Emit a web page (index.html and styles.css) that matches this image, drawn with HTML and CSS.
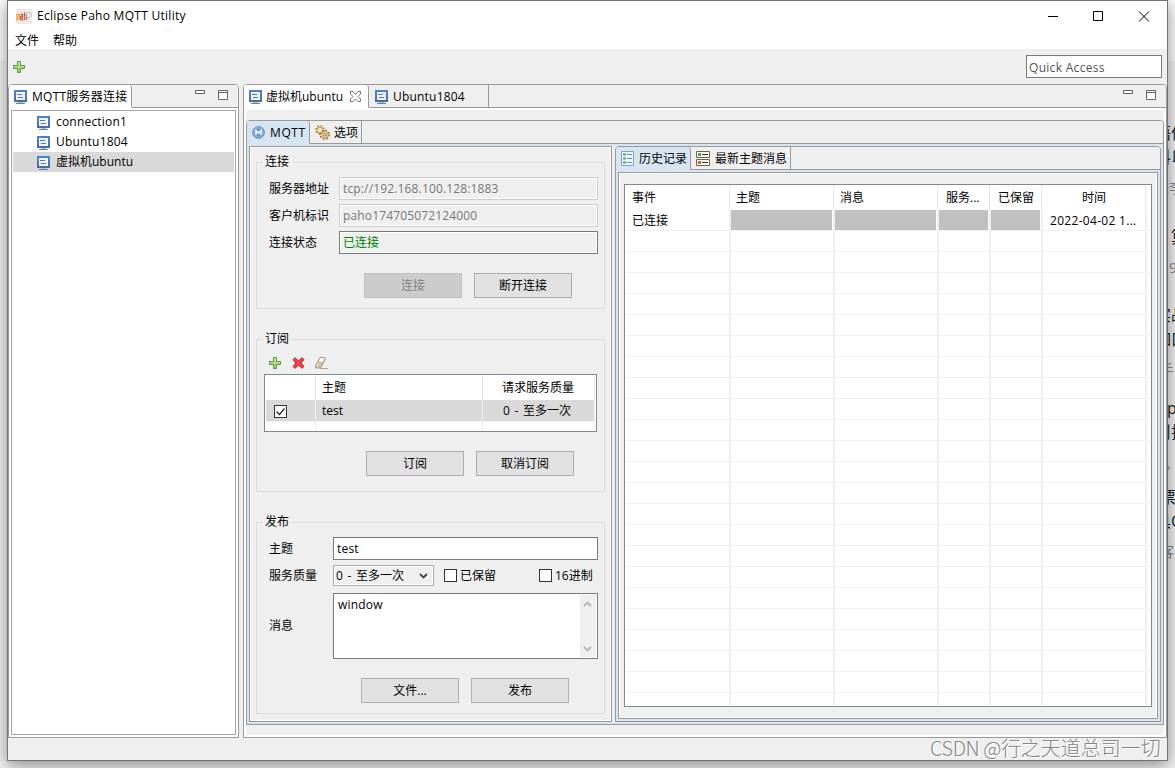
FILE: index.html
```html
<!DOCTYPE html>
<html lang="zh-CN">
<head>
    <meta charset="UTF-8">
    <title>Eclipse Paho MQTT Utility</title>
    <link rel="stylesheet" href="styles.css">
</head>
<body>
    <svg width="0" height="0" class="defs">
        <defs>
            <linearGradient id="green" x1="0" y1="0" x2="0" y2="1">
                <stop offset="0" stop-color="#e2e88c"/>
                <stop offset="1" stop-color="#8fc94d"/>
            </linearGradient>
            <linearGradient id="blue" x1="0" y1="0" x2="0" y2="1">
                <stop offset="0" stop-color="#4a86cc"/>
                <stop offset="1" stop-color="#4c6a9c"/>
            </linearGradient>
            <symbol id="monitor" viewBox="0 0 13 14">
                <path d="M0 0h13v12H0z" fill="url(#blue)"/>
                <path d="M2 2h9v8H2z" fill="#edf3fb"/>
                <path d="M3 4.5h5M4 7.500h5" stroke="#63749c"/>
                <path d="M4 12h5v1H4z" fill="#a9c4b4"/>
                <path d="M2 13h9v1H2z" fill="#5b86b4"/>
            </symbol>
            <symbol id="plus" viewBox="0 0 12 12">
                <path d="M4.5 .5h3v4h4v3h-4v4h-3v-4h-4v-3h4z" fill="url(#green)" stroke="#4f9d55"/>
            </symbol>
            <symbol id="cross" viewBox="0 0 13 12">
                <path d="M1 2.5L3 .7 6.5 3.8 10 .7 12 2.5 9 6 12 9.5 10 11.3 6.5 8.2 3 11.3 1 9.5 4 6z" fill="#ea4450" stroke="#c9202f"/>
            </symbol>
            <symbol id="eraser" viewBox="0 0 13 12">
                <path d="M5 .5h5v2.500L5.500 11H.6V8.500z" fill="#cdbfa8" stroke="#a99a84"/>
                <path d="M5.300 1h4.200L8 4.500H3.700z" fill="#fbf9f5"/>
                <path d="M3.500 6L1.800 10" stroke="#f3ece0"/>
                <path d="M5 11.500h8" stroke="#b5a48c"/>
            </symbol>
            <symbol id="mq" viewBox="0 0 13 13">
                <circle cx="6.500" cy="6.500" r="5.800" fill="#6699cc" stroke="#5580b4"/>
                <circle cx="6.500" cy="6.500" r="4.800" fill="none" stroke="#b4d0ea" stroke-width=".7"/>
                <path d="M4 9V4.500L6.500 7 9 4.500V9" fill="none" stroke="#fff" stroke-width="1.500"/>
            </symbol>
            <symbol id="gears" viewBox="0 0 15 15">
                <circle cx="5" cy="5" r="4" fill="none" stroke="#a98250" stroke-width="1.800" stroke-dasharray="1.600 1.540"/>
                <circle cx="5" cy="5" r="2.800" fill="#f7edd4" stroke="#d3ac66" stroke-width="1.400"/>
                <circle cx="9.800" cy="9.800" r="4.400" fill="none" stroke="#9a7044" stroke-width="1.800" stroke-dasharray="1.730 1.730"/>
                <circle cx="9.800" cy="9.800" r="3.200" fill="#f3d898" stroke="#c39a58"/>
                <circle cx="9.800" cy="9.800" r="1.200" fill="#fff" stroke="#94703e"/>
            </symbol>
            <symbol id="history" viewBox="0 0 13 15">
                <path d="M.5 .5h12v14H.5z" fill="#eef6fb" stroke="#8a9fc0"/>
                <path d="M2 3.500h3M2 7.500h3M2 11.500h3" stroke="#55a36c" stroke-width="2"/>
                <path d="M6 3.500h5M6 7.500h5M6 11.500h5" stroke="#7089bd"/>
            </symbol>
            <symbol id="latest" viewBox="0 0 14 15">
                <path d="M.5 .5h13v6H.5zM.5 8.500h13v6H.5z" fill="#fbfbee" stroke="#6b6850"/>
                <path d="M2 3.500h3" stroke="#3d9850" stroke-width="2.600"/>
                <path d="M2 11.500h3" stroke="#d5442d" stroke-width="2.600"/>
                <path d="M6 3.500h6M6 11.500h6" stroke="#333"/>
            </symbol>
            <symbol id="min" viewBox="0 0 10 4"><path d="M.5 .5h9v3h-9z" fill="#fff" stroke="#666"/></symbol>
            <symbol id="max" viewBox="0 0 10 10"><path d="M.5 .5h9v9h-9zM0 2.500h10" fill="#fff" stroke="#666"/></symbol>
            <symbol id="tabclose" viewBox="0 0 11 11">
                <path d="M.5 .5h2.500l2.500 3 2.500-3h2.500v2.500L8 5.500l2.500 2.500v2.500H8L5.500 8 3 10.500H.5V8L3 5.500.5 3z" fill="#fff" stroke="#777"/>
            </symbol>
        </defs>
    </svg>

    <div class="page-behind">
        <div class="post"><p>语件</p><p>料以</p><small>长李</small></div>
        <div class="post indent"><p>算</p><small>9</small></div>
        <div class="post"><p>实战</p><p>如口</p><small class="near">手</small></div>
        <div class="post"><p class="latin">p</p><p>刂排</p><small class="latin">,</small></div>
        <div class="post"><p class="near">票</p><p>具C</p><small class="near">客户</small></div>
    </div>

    <div class="window">
        <div class="titlebar">
            <svg class="logo" width="16" height="15" viewBox="0 0 16 15">
                <path d="M0 0h16v15H0z" fill="#ece9e6"/>
                <path d="M1 5v7M1 5.500h2v4H1" fill="none" stroke="#f0a63a" stroke-width="1.400"/>
                <path d="M4.500 5.500h2v5h-2v-3h2" fill="none" stroke="#d9584a" stroke-width="1.300"/>
                <path d="M8.500 3v8M8.500 6h2v5" fill="none" stroke="#a86a5c" stroke-width="1.200"/>
                <circle cx="12.800" cy="6" r="2.600" fill="none" stroke="#c5c0ba"/>
            </svg>
            <span class="title">Eclipse Paho MQTT Utility</span>
            <svg class="winbtns" width="102" height="11" viewBox="0 0 102 11" fill="none" stroke="#000">
                <path d="M0 5.500h10M45.500 .5h9v9h-9z"/>
                <path d="M91 .5l10 10M101 .5l-10 10"/>
            </svg>
        </div>
        <div class="menubar"><span>文件</span><span>帮助</span></div>
        <div class="toolbar">
            <svg width="12" height="12"><use href="#plus"/></svg>
            <div class="quick">Quick Access</div>
        </div>

        <div class="workbench">
            <div class="folder connections">
                <div class="tabs">
                    <div class="tab active tab-conn"><svg width="13" height="14"><use href="#monitor"/></svg><span>MQTT服务器连接</span></div>
                    <div class="tools">
                        <svg width="10" height="4"><use href="#min"/></svg>
                        <svg width="10" height="10"><use href="#max"/></svg>
                    </div>
                </div>
                <ul class="tree">
                    <li><svg width="13" height="14"><use href="#monitor"/></svg><span class="lat">connection1</span></li>
                    <li><svg width="13" height="14"><use href="#monitor"/></svg><span class="lat">Ubuntu1804</span></li>
                    <li class="selected"><svg width="13" height="14"><use href="#monitor"/></svg>虚拟机ubuntu</li>
                </ul>
            </div>

            <div class="folder editor">
                <div class="tabs">
                    <div class="tab active tab-vm"><svg width="13" height="14"><use href="#monitor"/></svg><span>虚拟机ubuntu</span><svg class="close" width="11" height="11"><use href="#tabclose"/></svg></div>
                    <div class="tab tab-ub"><svg width="13" height="14"><use href="#monitor"/></svg><span class="lat">Ubuntu1804</span></div>
                    <div class="tools">
                        <svg width="10" height="4"><use href="#min"/></svg>
                        <svg width="10" height="10"><use href="#max"/></svg>
                    </div>
                </div>
                <div class="editor-body">
                    <div class="folder blue main-folder">
                        <div class="tabs">
                            <div class="tab active tab-mqtt"><svg width="13" height="13"><use href="#mq"/></svg><span class="wide">MQTT</span></div>
                            <div class="tab tab-opt"><svg width="15" height="15"><use href="#gears"/></svg><span>选项</span></div>
                        </div>
                        <div class="split">
                            <div class="form-pane">
                                <fieldset class="g-conn">
                                    <legend>连接</legend>
                                    <div class="row"><label>服务器地址</label><div class="field disabled">tcp://192.168.100.128:1883</div></div>
                                    <div class="row"><label>客户机标识</label><div class="field disabled">paho174705072124000</div></div>
                                    <div class="row"><label>连接状态</label><div class="field readonly">已连接</div></div>
                                    <div class="buttons"><button disabled>连接</button><button>断开连接</button></div>
                                </fieldset>

                                <fieldset class="g-sub">
                                    <legend>订阅</legend>
                                    <div class="icons">
                                        <svg width="12" height="12"><use href="#plus"/></svg>
                                        <svg width="13" height="12"><use href="#cross"/></svg>
                                        <svg width="13" height="12"><use href="#eraser"/></svg>
                                    </div>
                                    <div class="sub-table">
                                        <div class="tr head"><span></span><span>主题</span><span>请求服务质量</span></div>
                                        <div class="tr sel"><span><b class="check"><svg width="11" height="11" viewBox="0 0 11 11"><path d="M1.500 5.500l3 3L9.500 2.500" fill="none" stroke="#222" stroke-width="1.200"/></svg></b></span><span>test</span><span class="qos">0 - 至多一次</span></div>
                                        <div class="tr rest"><span></span><span></span><span></span></div>
                                    </div>
                                    <div class="buttons"><button>订阅</button><button>取消订阅</button></div>
                                </fieldset>

                                <fieldset class="g-pub">
                                    <legend>发布</legend>
                                    <div class="row"><label>主题</label><div class="field lat">test</div></div>
                                    <div class="row options">
                                        <label>服务质量</label>
                                        <div class="combo"><span class="qos">0 - 至多一次</span><svg width="9" height="6" viewBox="0 0 9 6"><path d="M1 1l3.500 3.500L8 1" fill="none" stroke="#444" stroke-width="1.800"/></svg></div>
                                        <b class="check"></b><span class="retained">已保留</span>
                                        <b class="check"></b><span>16进制</span>
                                    </div>
                                    <div class="row message">
                                        <label>消息</label>
                                        <div class="textarea">
                                            <span class="lat">window</span>
                                            <div class="scroll">
                                                <svg width="9" height="6" viewBox="0 0 9 6"><path d="M1 5l3.500-3.500L8 5" fill="none" stroke="#b5b5b5" stroke-width="1.800"/></svg>
                                                <svg width="9" height="6" viewBox="0 0 9 6"><path d="M1 1l3.500 3.500L8 1" fill="none" stroke="#b5b5b5" stroke-width="1.800"/></svg>
                                            </div>
                                        </div>
                                    </div>
                                    <div class="buttons"><button>文件...</button><button>发布</button></div>
                                </fieldset>
                            </div>

                            <div class="folder blue history">
                                <div class="tabs">
                                    <div class="tab active tab-his"><svg width="13" height="15"><use href="#history"/></svg><span>历史记录</span></div>
                                    <div class="tab tab-new"><svg width="14" height="15"><use href="#latest"/></svg><span>最新主题消息</span></div>
                                </div>
                                <div class="history-body">
                                    <div class="log">
                                        <div class="log-row log-head"><span>事件</span><span>主题</span><span>消息</span><span>服务...</span><span>已保留</span><span>时间</span><span></span></div>
                                        <div class="log-row"><span>已连接</span><span class="na"></span><span class="na"></span><span class="na"></span><span class="na"></span><span class="time">2022-04-02 1...</span><span></span></div>
                                        <div class="log-row blank"><span></span><span></span><span></span><span></span><span></span><span></span><span></span></div>
                                    </div>
                                </div>
                            </div>
                        </div>
                    </div>
                </div>
            </div>
        </div>
    </div>
    <div class="watermark"><span>CSDN @</span>行之天道总司一切</div>
</body>
</html>
```
FILE: styles.css
```css
* { margin: 0; padding: 0; box-sizing: border-box; }
body {
    width: 1175px;
    height: 768px;
    overflow: hidden;
    position: relative;
    background: linear-gradient(#fff 61px, #f5f5f5 61px);
    font: 12px/16px "Open Sans", "Noto Sans CJK SC", sans-serif;
    color: #000;
}
svg { display: block; flex: none; }
.defs { position: absolute; }
.lat { letter-spacing: .2px; }
.wide { letter-spacing: .6px; }
.qos { word-spacing: 1.5px; }

/* page showing past the right edge of the window */
.page-behind {
    position: absolute;
    left: 1155px;
    top: 121px;
    width: 34px;
    color: #222;
    white-space: nowrap;
}
.post p { font-size: 16px; line-height: 24px; height: 24px; }
.post small { display: block; font-size: 14px; line-height: 38px; height: 38px; color: #889; }
.post:nth-child(2) { margin: 18px 0 16px 16px; }
.post:nth-child(2) small { margin-left: -2px; }
.post:nth-child(4) { margin: 7px 0 3px; }
.post .latin { padding-left: 12px; }
.post .near { padding-left: 5px; }

.window {
    position: relative;
    width: 1161px;
    height: 761px;
    margin-left: 7px;
    border: 1px solid #737373;
    background: #efefef;
    box-shadow: 0 4px 16px 1px rgba(0,0,0,.42);
    display: flex;
    flex-direction: column;
}
.titlebar {
    height: 30px;
    background: #fff;
    display: flex;
    align-items: center;
    padding: 0 17px 0 8px;
}
.title { margin-left: 5px; flex: 1; letter-spacing: .28px; }
.menubar { height: 18px; background: #fff; display: flex; gap: 14px; padding: 2px 7px 0; }
.toolbar {
    height: 35px;
    display: flex;
    align-items: center;
    justify-content: space-between;
    padding: 0 5px;
}
.quick {
    width: 136px;
    height: 23px;
    border: 1px solid #7a7a7a;
    background: #fff;
    color: #555;
    padding: 4px 2px 0;
    letter-spacing: .3px;
}

.workbench { display: flex; gap: 4px; height: 654px; }
.folder {
    border: 1px solid #999;
    border-radius: 4px 4px 0 0;
    background: #fff;
    display: flex;
    flex-direction: column;
}
.tabs { height: 23px; display: flex; background: #efefef; border-radius: 3px 3px 0 0; flex: none; }
.tab {
    display: flex;
    align-items: center;
    gap: 5px;
    padding-left: 5px;
    border-right: 1px solid #999;
    border-bottom: 1px solid #999;
    white-space: nowrap;
}
.tab > span { padding-top: 2px; }
.tab.active { background: #fff; border-bottom-color: #fff; border-radius: 3px 3px 0 0; }
.tabs::after { content: ""; flex: 1; border-bottom: 1px solid #999; order: 1; }
.tools {
    order: 2;
    display: flex;
    gap: 13px;
    padding: 5px 10px 0 0;
    border-bottom: 1px solid #999;
}
.connections { width: 231px; }
.connections .tree {
    flex: 1;
    margin: 2px 2px 2px;
    border: 1px solid #a5a5a8;
    list-style: none;
    padding: 1px;
}
.tree li { height: 20px; display: flex; align-items: center; gap: 6px; padding-left: 24px; }
.tree li svg { margin-top: 1px; }
.tree .selected { background: #d9d9d9; }
.tab svg { margin-top: 1px; }
.tab-conn { width: 123px; letter-spacing: .25px; }
.editor { width: 924px; }
.tab-vm { width: 125px; gap: 4px; }
.tab-vm .close { margin-left: 3px; }
.tab-ub { width: 120px; padding-left: 6px; }

.editor-body { flex: 1; margin: 2px 2px; background: #efefef; padding: 10px 0 0; }
.blue { background: #d7e4f2; }
.blue > .tabs > .active { background: #d7e4f2; border-bottom-color: #d7e4f2; }
.main-folder { height: 605px; width: 918px; }
.main-folder > .split { flex: 1; display: flex; margin: 2px 2px 2px; background: #efefef; gap: 3px; }
.tab-mqtt { width: 63px; gap: 5px; }
.tab-mqtt svg { margin-top: 0; }
.tab-opt { width: 52px; gap: 4px; }

.form-pane {
    width: 363px;
    height: 576px;
    border: 1px solid #999;
    box-shadow: inset 0 0 0 1px #fff;
    padding: 3px 6px 0;
}
fieldset { border: 1px solid #dcdcdc; min-width: 0; }
legend { height: 24px; line-height: 24px; margin-left: 5px; padding: 0 3px; }
.row { display: flex; align-items: center; padding-left: 12px; }
.row label { flex: none; }
.field {
    height: 23px;
    flex: 1;
    border: 1px solid #7a7a7a;
    background: #fff;
    line-height: 19px;
    padding: 1px 3px;
}
.field.disabled { border-color: #ccc; color: #777; background: #efefef; box-shadow: inset 0 0 0 1px #fff; letter-spacing: .15px; }
.field.readonly { background: #efefef; color: #008000; box-shadow: inset 0 0 0 1px #fff; }
.buttons { display: flex; gap: 12px; }
button {
    width: 98px;
    height: 25px;
    font: inherit;
    color: #000;
    background: #e1e1e1;
    border: 1px solid #adadad;
}
button:disabled { background: #ccc; border-color: #bfbfbf; color: #838383; }

.g-conn { height: 159px; width: 349px; }
.g-conn .row { width: 341px; margin-bottom: 4px; }
.g-conn .row:nth-of-type(1) { margin-top: 3px; }
.g-conn label { width: 70px; }
.g-conn .buttons { margin: 19px 0 0 107px; }

.g-sub { height: 165px; width: 349px; margin-top: 18px; }
.icons { display: flex; gap: 11px; padding: 6px 0 5px 12px; }
.icons svg:last-child { margin-left: -1px; }
.sub-table { width: 333px; height: 58px; margin-left: 7px; border: 1px solid #828790; background: #fff; padding: 1px; }
.tr { display: grid; grid-template-columns: 50px 167px 112px; height: 24px; }
.tr span { border-right: 1px solid #e5e5e5; padding-left: 6px; line-height: 24px; }
.tr.head span:nth-child(3) { padding-left: 19px; }
.tr.sel { height: 21px; }
.tr.sel span { background: #d9d9d9; line-height: 21px; border-color: #eef0f6; }
.tr.sel span:nth-child(3) { padding-left: 20px; }
.tr.rest { height: 9px; border-top: 1px solid #efefef; }
.tr.rest span { border-color: #e9edf6; }
.check {
    display: block;
    width: 13px;
    height: 13px;
    border: 1px solid #333;
    background: #fff;
    flex: none;
}
.tr .check { margin: 5px 0 0 2px; }
.g-sub .buttons { margin: 19px 0 0 109px; }

.g-pub { height: 204px; width: 349px; margin-top: 18px; }
.g-pub .row { width: 341px; margin-top: 3px; }
.g-pub label { width: 64px; }
.g-pub .options { margin-top: 5px; }
.combo {
    width: 101px;
    height: 21px;
    border: 1px solid #adadad;
    display: flex;
    align-items: center;
    justify-content: space-between;
    padding: 0 5px 0 2px;
    margin-right: 10px;
    box-shadow: inset 0 0 0 1px #fff;
}
.options .check + span { margin-left: 3px; }
.retained { width: 79px; }
.g-pub .message { margin-top: 7px; }
.textarea {
    flex: 1;
    height: 66px;
    border: 1px solid #7a7a7a;
    background: #fff;
    display: flex;
    justify-content: space-between;
    padding: 1px 1px 1px 4px;
}
.textarea .lat { padding-top: 2px; }
.scroll {
    width: 16px;
    background: #efefef;
    display: flex;
    flex-direction: column;
    align-items: center;
    justify-content: space-between;
    padding: 6px 1px 5px 0;
}
.g-pub .buttons { margin: 19px 0 0 104px; }

.history { width: 546px; height: 576px; }
.tab-his { width: 75px; gap: 5px; }
.tab-new { width: 100px; gap: 5px; }
.history-body {
    flex: 1;
    margin: 2px 2px 2px;
    border: 1px solid #999;
    box-shadow: inset 0 0 0 1px #fff;
    background: #efefef;
    padding: 11px 5px;
}
.log {
    width: 528px;
    height: 523px;
    border: 1px solid #828790;
    background: #fff;
    padding: 1px;
}
.log-row { display: grid; grid-template: 21px / 105px 104px 104px 52px 52px 104px 3px; height: 21px; }
.log-row span { border-right: 2px solid #eef0f6; border-bottom: 1px solid #f0f0f0; padding-left: 6px; line-height: 22px; white-space: nowrap; }
.log-row span:last-child { border-right: 0; padding: 0; }
.log-row.log-head { height: 24px; grid-template-rows: 24px; }
.log-head span { border-right: 1px solid #e5e5e5; margin-right: 1px; border-bottom: 0; padding-left: 5px; line-height: 23px; }
.log-head span:first-child { padding-left: 6px; }
.log-head span:nth-child(4), .log-head span:nth-child(5) { padding-left: 7px; }
.log-head span:nth-child(6) { padding: 0; text-align: center; }
.log-row .na { background: #c0c0c0; background-clip: padding-box; box-shadow: inset -1px 0 0 #fff; }
.log-row .time { padding-left: 7px; letter-spacing: .3px; }
.log-row.blank { height: 474px; grid-template-rows: 474px; }
.blank span { border-bottom: 0; background: repeating-linear-gradient(transparent 0 20px, #f0f0f0 20px 21px); }

.watermark {
    position: absolute;
    left: 930px;
    top: 733px;
    font: 300 20px/30px "Noto Sans CJK SC", sans-serif;
    color: #858585;
    text-shadow: 1px 1px 0 #fff;
    white-space: nowrap;
}
.watermark span { letter-spacing: -.5px; }
```
